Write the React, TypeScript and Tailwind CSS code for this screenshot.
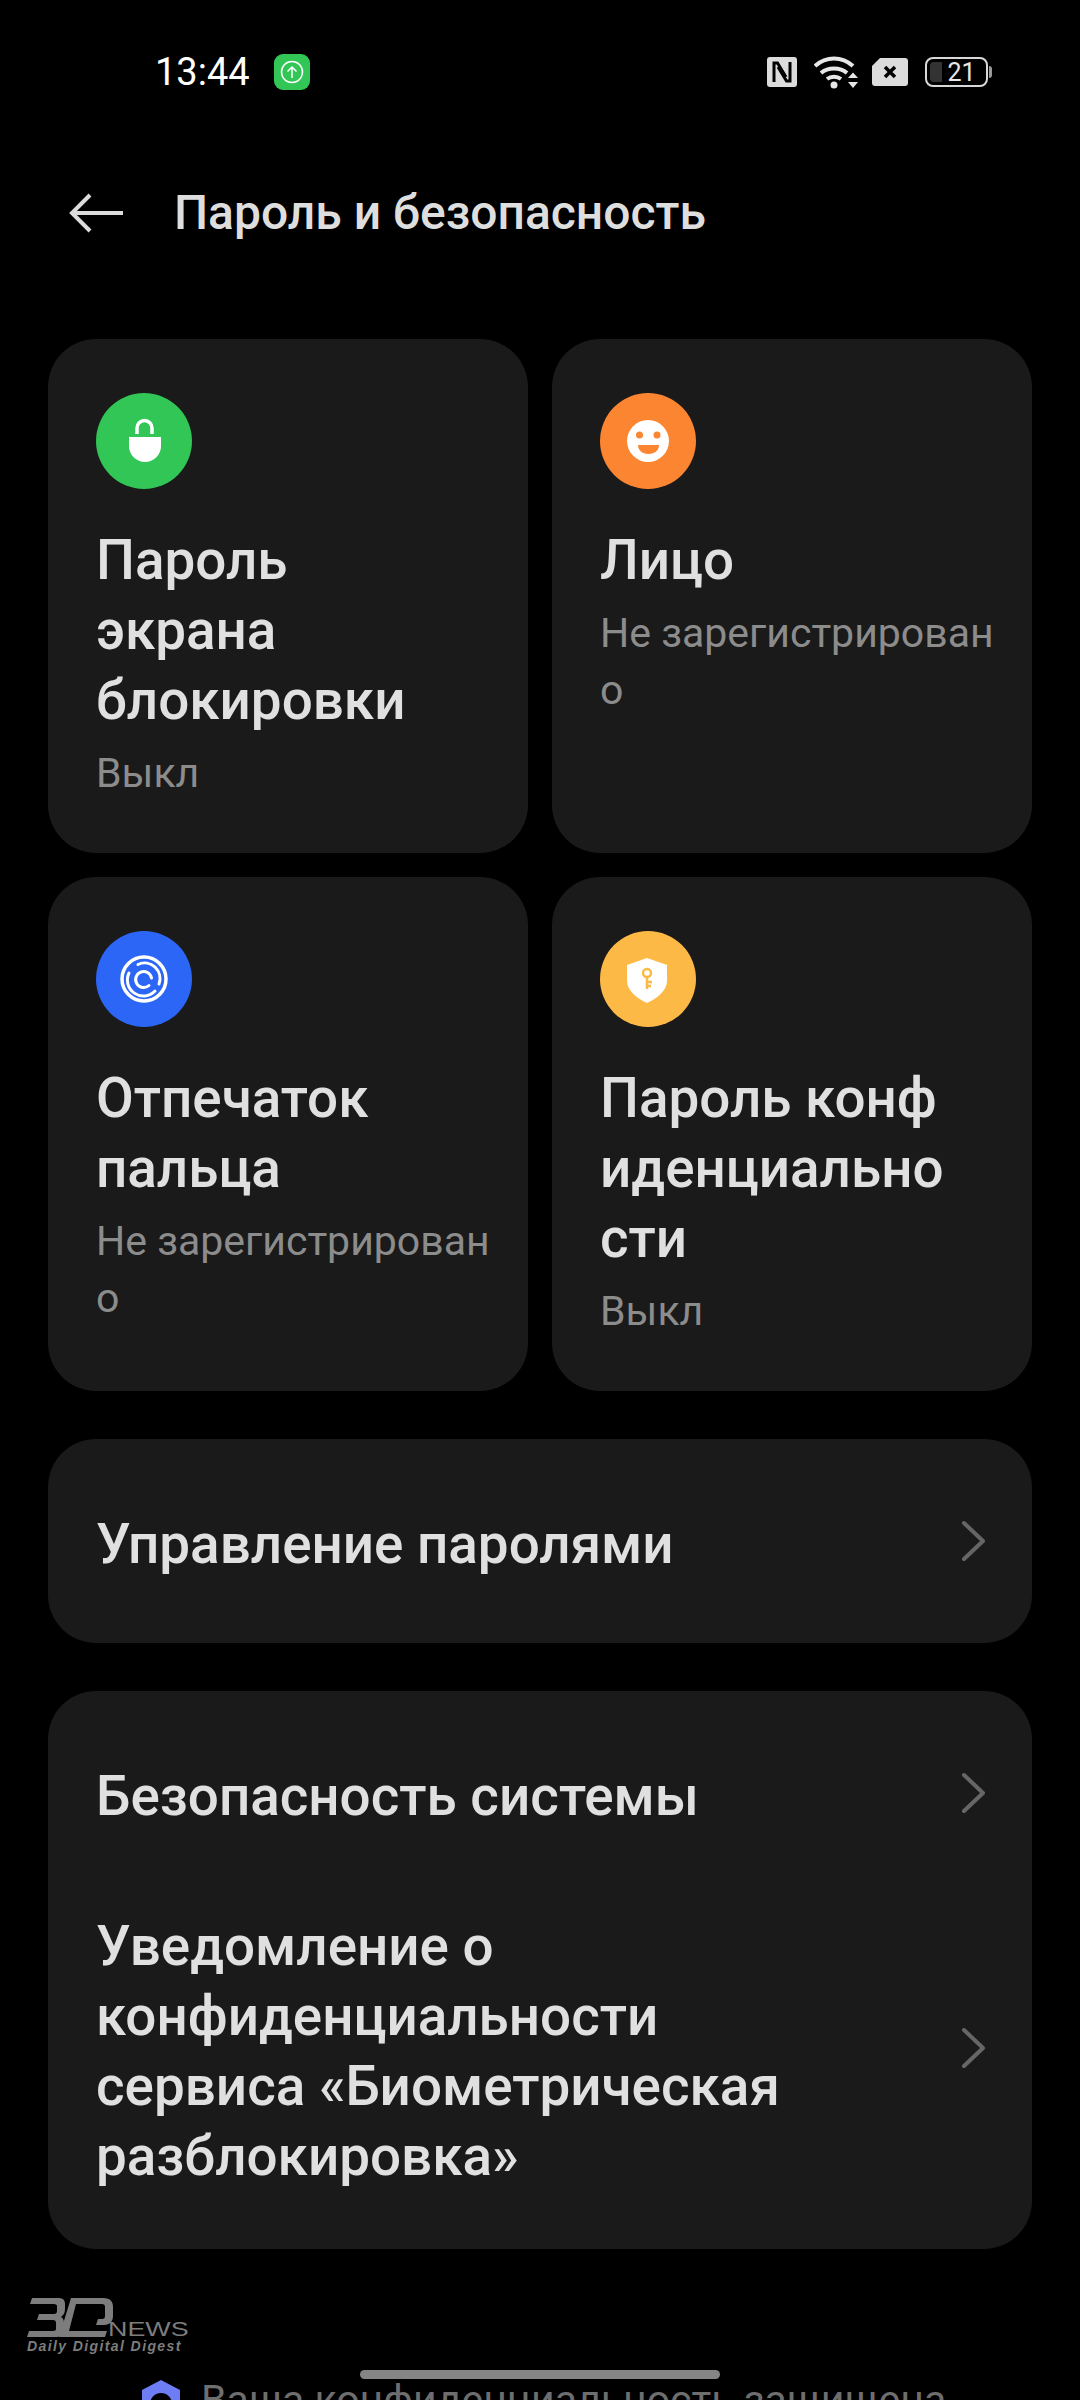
import React from 'react';

const LockIcon = () => (
    <svg viewBox="0 0 96 96" className="w-24 h-24">
        <circle cx="48" cy="48" r="48" fill="#31c655" />
        <path d="M41 41v-6a7.500 7.500 0 0 1 15 0v6" fill="none" stroke="#fff" strokeWidth="3.500" />
        <path d="M33 44h32v9a16 16 0 0 1-32 0z" fill="#fff" />
    </svg>
);

const FaceIcon = () => (
    <svg viewBox="0 0 96 96" className="w-24 h-24">
        <circle cx="48" cy="48" r="48" fill="#fb8530" />
        <circle cx="48" cy="48" r="21" fill="#fff" />
        <circle cx="39.500" cy="42" r="3.500" fill="#fb8530" />
        <circle cx="57" cy="42" r="3.500" fill="#fb8530" />
        <path d="M38 52h21c0 5-4 9-10.500 9S38 57 38 52z" fill="#fb8530" />
    </svg>
);

const FingerprintIcon = () => (
    <svg viewBox="0 0 96 96" className="w-24 h-24" fill="none" stroke="#fff" strokeLinecap="round">
        <circle cx="48" cy="48" r="48" fill="#2c66f6" stroke="none" />
        <circle cx="48" cy="48" r="22" strokeWidth="3.500" />
        <path d="M42 33.500A15.500 15.500 0 0 1 63 53" strokeWidth="3" />
        <path d="M33 42A16 16 0 0 0 59 60" strokeWidth="3" />
        <path d="M55.500 47A8 8 0 1 0 53 54.500" strokeWidth="3" />
    </svg>
);

const ShieldIcon = () => (
    <svg viewBox="0 0 96 96" className="w-24 h-24">
        <circle cx="48" cy="48" r="48" fill="#fdb945" />
        <path d="M47 27l20 7v16c0 9-9 17-20 22-11-5-20-13-20-22V34z" fill="#fff" />
        <circle cx="47" cy="42" r="4" fill="none" stroke="#fdb945" strokeWidth="2.500" />
        <path d="M47 46v12M47 51h5M47 55h4" fill="none" stroke="#fdb945" strokeWidth="2.500" />
    </svg>
);

const Chevron = () => (
    <svg viewBox="0 0 24 42" className="w-6 h-[42px] shrink-0" fill="none" stroke="#666" strokeWidth="4" strokeLinecap="round" strokeLinejoin="round">
        <path d="M3 3l19 18L3 39" />
    </svg>
);

interface Tile {
    icon: React.ReactNode;
    title: string[];
    sub: string[];
}

const tiles: Tile[] = [
    { icon: <LockIcon />, title: ['Пароль', 'экрана', 'блокировки'], sub: ['Выкл'] },
    { icon: <FaceIcon />, title: ['Лицо'], sub: ['Не зарегистрирован', 'о'] },
    { icon: <FingerprintIcon />, title: ['Отпечаток', 'пальца'], sub: ['Не зарегистрирован', 'о'] },
    { icon: <ShieldIcon />, title: ['Пароль конф', 'иденциально', 'сти'], sub: ['Выкл'] },
];

const StatusBar = () => (
    <div className="h-[72px] mt-[36px] pl-[155px] pr-[88px] flex items-center justify-between">
        <div className="flex items-center gap-[24px]">
            <span className="text-[38px] leading-none text-white">13:44</span>
            <div className="w-9 h-9 rounded-[9px] bg-[#31c655] flex items-center justify-center">
                <svg viewBox="0 0 24 24" className="w-6 h-6" fill="none" stroke="#fff" strokeWidth="1.500">
                    <circle cx="12" cy="12" r="10.500" />
                    <path d="M12 18V7M7.500 11.500L12 7l4.500 4.500" />
                </svg>
            </div>
        </div>
        <div className="flex items-center">
            <svg viewBox="0 0 30 30" className="w-[30px] h-[30px] mr-[17px]">
                <rect width="30" height="30" rx="3" fill="#dcdcdc" />
                <path d="M7 25V6h3.500L19 20M23 5v19h-3.500L11 10" fill="none" stroke="#000" strokeWidth="3" />
            </svg>
            <svg viewBox="0 0 44 34" className="w-11 h-[34px] mr-[14px]" fill="none" stroke="#e6e6e6" strokeWidth="4">
                <path d="M1 11c11-10 27-10 38 0M7 18c7-6 19-6 26 0M13 24c4-3 10-3 14 0" />
                <circle cx="20" cy="30" r="3.500" fill="#e6e6e6" stroke="none" />
                <path d="M34 23h10l-5-5.500zM34 27h10l-5 6z" fill="#e6e6e6" stroke="none" />
            </svg>
            <svg viewBox="0 0 36 28" className="w-9 h-7 mr-[17px]">
                <path d="M8 0h25a3 3 0 0 1 3 3v22a3 3 0 0 1-3 3H3a3 3 0 0 1-3-3V8z" fill="#dcdcdc" />
                <path d="M13 9l10 10M23 9L13 19" stroke="#000" strokeWidth="3.500" />
            </svg>
            <div className="flex items-center gap-[1px]">
                <div className="w-[63px] h-[30px] rounded-[8px] border-2 border-[#d8d8d8] relative flex items-center justify-center pl-[10px]">
                    <div className="absolute left-[3px] top-[3px] bottom-[3px] w-[12px] rounded-l-[4px] bg-[#333]" />
                    <span className="text-[25px] leading-none text-[#e6e6e6] relative">21</span>
                </div>
                <div className="w-[3px] h-[12px] rounded-r bg-[#999]" />
            </div>
        </div>
    </div>
);

const App: React.FC = () => {
    return (
        <div className="relative w-[1080px] h-[2400px] overflow-hidden bg-black font-['Roboto',sans-serif]">
            <StatusBar />

            <div className="mt-[75px] h-[60px] flex items-center pl-[69px]">
                <svg viewBox="0 0 54 40" className="w-[54px] h-10 mr-[51px]" fill="none" stroke="#dcdcdc" strokeWidth="4">
                    <path d="M54 20H3M21 2L3 20l18 18" />
                </svg>
                <h1 className="text-[48px] leading-none font-medium text-[#dedede]">Пароль и безопасность</h1>
            </div>

            <div className="mt-[96px] mx-12 grid grid-cols-2 gap-6">
                {tiles.map((t, i) => (
                    <div key={i} className="h-[514px] rounded-[48px] bg-[#1a1a1a] pt-[54px] pl-12">
                        {t.icon}
                        <div className="mt-[36px] text-[54.800px] leading-[70px] font-medium text-[#e0e0e0]">
                            {t.title.map((line) => (
                                <div key={line}>{line}</div>
                            ))}
                        </div>
                        <div className="mt-[10px] text-[41px] leading-[57px] text-[#8c8c8c]">
                            {t.sub.map((line) => (
                                <div key={line}>{line}</div>
                            ))}
                        </div>
                    </div>
                ))}
            </div>

            <div className="mt-12 mx-12 h-[204px] rounded-[48px] bg-[#1a1a1a] flex items-center justify-between pl-12 pr-[47px]">
                <span className="pt-[6px] text-[54.800px] font-medium text-[#e0e0e0]">Управление паролями</span>
                <Chevron />
            </div>

            <div className="mt-12 mx-12 h-[558px] rounded-[48px] bg-[#1a1a1a] pl-12 pr-[47px]">
                <div className="h-[204px] flex items-center justify-between">
                    <span className="pt-[6px] text-[54.800px] font-medium text-[#e0e0e0]">Безопасность системы</span>
                    <Chevron />
                </div>
                <div className="h-[306px] flex items-center justify-between">
                    <div className="pt-[5px] text-[54.800px] leading-[70px] font-medium text-[#e0e0e0]">
                        <div>Уведомление о</div>
                        <div>конфиденциальности</div>
                        <div>сервиса «Биометрическая</div>
                        <div>разблокировка»</div>
                    </div>
                    <Chevron />
                </div>
            </div>

            <div className="mt-[131px] pl-[141px] flex items-start gap-[20px]">
                <svg viewBox="0 0 40 40" className="w-10 h-10 shrink-0">
                    <path d="M20 0l19 10v30H1V10z" fill="#6f7df5" />
                    <circle cx="20" cy="24" r="11" fill="#000" />
                </svg>
                <span className="text-[41px] leading-none text-[#6e6e6e] whitespace-nowrap">Ваша конфиденциальность защищена</span>
            </div>

            {/* watermark */}
            <div className="absolute left-[27px] top-[2298px] w-[163px] text-[#7d7d7d]">
                <svg viewBox="0 0 88 39" className="w-[88px] h-[39px]" fill="#7d7d7d">
                    <path d="M5 0h26c5 0 7 2 7 6v5c0 3-1 6-4 8 2 1 3 3 3 6v7c0 4-3 7-7 7H0l2-6h24c2 0 3-1 3-2v-6c0-2-1-3-3-3H10l2-6h15c2 0 3-1 3-3V8c0-1-1-2-3-2H3z" />
                    <path d="M44 0h32c8 0 10 4 10 9v9c0 5-3 9-9 9h-8l2-6h4c2 0 3-1 3-3V9c0-2-1-3-3-3H49l-7 27h38l-2 6H32z" />
                </svg>
                <span className="absolute left-[81px] top-[20px] text-[21px] leading-none origin-left scale-x-[1.28] font-['Liberation_Sans',sans-serif]">NEWS</span>
                <div className="mt-[2px] text-[14px] leading-none italic font-bold tracking-[1.4px] font-['Liberation_Sans',sans-serif] whitespace-nowrap">Daily Digital Digest</div>
            </div>

            {/* gesture bar */}
            <div className="absolute left-[360px] top-[2370px] w-[360px] h-[9px] rounded-full bg-[#858585]" />
        </div>
    );
};

export default App;
